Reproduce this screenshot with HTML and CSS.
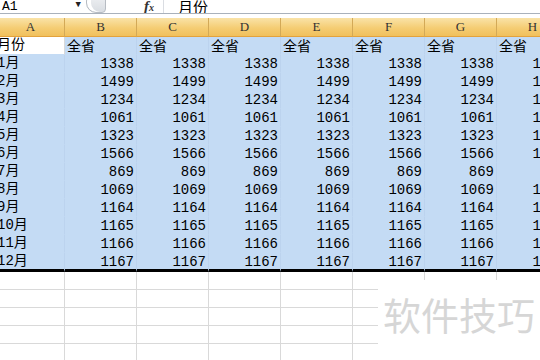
FILE: index.html
```html
<!DOCTYPE html>
<html lang="zh-CN">
<head>
    <meta charset="UTF-8">
    <title>Excel</title>
    <link rel="stylesheet" href="styles.css">
</head>
<body>
    <div class="formula-bar">
        <div class="name-box">A1<span class="drop">&#9660;</span></div>
        <div class="grip"></div>
        <div class="fx">f<sub>x</sub></div>
        <div class="formula">月份</div>
    </div>
    <div class="sheet">
        <div class="row head">
            <div class="cell">A</div><div class="cell">B</div><div class="cell">C</div><div class="cell">D</div>
            <div class="cell">E</div><div class="cell">F</div><div class="cell">G</div><div class="cell">H</div>
        </div>
        <div class="row sel">
            <div class="cell txt active">月份</div><div class="cell txt">全省</div><div class="cell txt">全省</div><div class="cell txt">全省</div>
            <div class="cell txt">全省</div><div class="cell txt">全省</div><div class="cell txt">全省</div><div class="cell txt">全省</div>
        </div>
        <div class="row sel">
            <div class="cell txt">1月</div><div class="cell">1338</div><div class="cell">1338</div><div class="cell">1338</div>
            <div class="cell">1338</div><div class="cell">1338</div><div class="cell">1338</div><div class="cell">1338</div>
        </div>
        <div class="row sel">
            <div class="cell txt">2月</div><div class="cell">1499</div><div class="cell">1499</div><div class="cell">1499</div>
            <div class="cell">1499</div><div class="cell">1499</div><div class="cell">1499</div><div class="cell">1499</div>
        </div>
        <div class="row sel">
            <div class="cell txt">3月</div><div class="cell">1234</div><div class="cell">1234</div><div class="cell">1234</div>
            <div class="cell">1234</div><div class="cell">1234</div><div class="cell">1234</div><div class="cell">1234</div>
        </div>
        <div class="row sel">
            <div class="cell txt">4月</div><div class="cell">1061</div><div class="cell">1061</div><div class="cell">1061</div>
            <div class="cell">1061</div><div class="cell">1061</div><div class="cell">1061</div><div class="cell">1061</div>
        </div>
        <div class="row sel">
            <div class="cell txt">5月</div><div class="cell">1323</div><div class="cell">1323</div><div class="cell">1323</div>
            <div class="cell">1323</div><div class="cell">1323</div><div class="cell">1323</div><div class="cell">1323</div>
        </div>
        <div class="row sel">
            <div class="cell txt">6月</div><div class="cell">1566</div><div class="cell">1566</div><div class="cell">1566</div>
            <div class="cell">1566</div><div class="cell">1566</div><div class="cell">1566</div><div class="cell">1566</div>
        </div>
        <div class="row sel">
            <div class="cell txt">7月</div><div class="cell">869</div><div class="cell">869</div><div class="cell">869</div>
            <div class="cell">869</div><div class="cell">869</div><div class="cell">869</div><div class="cell">869</div>
        </div>
        <div class="row sel">
            <div class="cell txt">8月</div><div class="cell">1069</div><div class="cell">1069</div><div class="cell">1069</div>
            <div class="cell">1069</div><div class="cell">1069</div><div class="cell">1069</div><div class="cell">1069</div>
        </div>
        <div class="row sel">
            <div class="cell txt">9月</div><div class="cell">1164</div><div class="cell">1164</div><div class="cell">1164</div>
            <div class="cell">1164</div><div class="cell">1164</div><div class="cell">1164</div><div class="cell">1164</div>
        </div>
        <div class="row sel">
            <div class="cell txt">10月</div><div class="cell">1165</div><div class="cell">1165</div><div class="cell">1165</div>
            <div class="cell">1165</div><div class="cell">1165</div><div class="cell">1165</div><div class="cell">1165</div>
        </div>
        <div class="row sel">
            <div class="cell txt">11月</div><div class="cell">1166</div><div class="cell">1166</div><div class="cell">1166</div>
            <div class="cell">1166</div><div class="cell">1166</div><div class="cell">1166</div><div class="cell">1166</div>
        </div>
        <div class="row sel last">
            <div class="cell txt">12月</div><div class="cell">1167</div><div class="cell">1167</div><div class="cell">1167</div>
            <div class="cell">1167</div><div class="cell">1167</div><div class="cell">1167</div><div class="cell">1167</div>
        </div>
        <div class="row"><div class="cell"></div><div class="cell"></div><div class="cell"></div><div class="cell"></div><div class="cell"></div><div class="cell"></div><div class="cell"></div><div class="cell"></div></div>
        <div class="row"><div class="cell"></div><div class="cell"></div><div class="cell"></div><div class="cell"></div><div class="cell"></div><div class="cell"></div><div class="cell"></div><div class="cell"></div></div>
        <div class="row"><div class="cell"></div><div class="cell"></div><div class="cell"></div><div class="cell"></div><div class="cell"></div><div class="cell"></div><div class="cell"></div><div class="cell"></div></div>
        <div class="row"><div class="cell"></div><div class="cell"></div><div class="cell"></div><div class="cell"></div><div class="cell"></div><div class="cell"></div><div class="cell"></div><div class="cell"></div></div>
        <div class="row"><div class="cell"></div><div class="cell"></div><div class="cell"></div><div class="cell"></div><div class="cell"></div><div class="cell"></div><div class="cell"></div><div class="cell"></div></div>
    </div>
    <div class="watermark">软件技巧</div>
</body>
</html>
```

FILE: styles.css
```css
* { margin: 0; padding: 0; box-sizing: border-box; }
html, body { width: 540px; height: 360px; overflow: hidden; background: #fff; }
body { position: relative; font-family: "Liberation Mono", "Noto Sans CJK SC", monospace; color: #000; }

.formula-bar {
    height: 14px;
    display: flex;
    align-items: flex-start;
    border-bottom: 1px solid #a9b1bb;
    margin-bottom: 4px;
    overflow: hidden;
}
.name-box {
    width: 86px;
    display: flex;
    justify-content: space-between;
    font-size: 13px;
    line-height: 13px;
    padding-left: 2px;
    padding-right: 5px;
}
.drop { font-size: 9px; line-height: 10px; color: #222; }
.grip {
    width: 20px;
    height: 22px;
    margin-top: -9px;
    border: 1px solid #b7bcc3;
    border-radius: 10px 4px 4px 10px;
    background: linear-gradient(#f4f5f7, #d9dde2);
    box-shadow: inset 4px 0 0 #fff;
}
.fx {
    width: 58px;
    padding-left: 38px;
    font-family: "Liberation Serif", serif;
    font-style: italic;
    font-weight: bold;
    font-size: 15px;
    line-height: 12px;
    color: #333;
    border-right: 1px solid #dadde2;
    height: 13px;
}
.fx sub { font-size: 10px; vertical-align: 0; }
.formula {
    padding-left: 14px;
    font-family: "Noto Sans CJK SC", sans-serif;
    font-size: 15px;
    line-height: 13px;
}

.sheet { margin-left: -3px; }
.row { display: flex; height: 18px; }
.cell {
    flex: 0 0 72px;
    height: 18px;
    border-right: 1px solid #d9d9d9;
    border-bottom: 1px solid #d9d9d9;
    text-align: right;
    padding-right: 2px;
    font-size: 14px;
    line-height: 18px;
    white-space: nowrap;
    overflow: hidden;
}
.cell:first-child { flex-basis: 68px; }
.cell.txt { text-align: left; padding-left: 2px; font-family: "Noto Sans CJK SC", sans-serif; line-height: 17px; }
.cell.txt:first-child { padding-left: 0; font-family: "Liberation Mono", "Noto Sans CJK SC", monospace; }

.head { height: 19px; }
.head .cell {
    height: 19px;
    text-align: center;
    padding: 0;
    font-family: "Liberation Serif", serif;
    font-size: 13px;
    line-height: 18px;
    color: #333;
    background: linear-gradient(#fae3a8, #f5cd74 55%, #f1c05c);
    border-right: 1px solid #d3a957;
    border-bottom: 1px solid #e3a23c;
}

.sel .cell { background: #c4dbf4; border-right-color: #bcd3ee; border-bottom-color: #c4dbf4; }
.sel .cell.active { background: #fff; border-right-color: #d9d9d9; border-bottom-color: #c4dbf4; }
.last .cell { height: 19px; border-bottom: 3px solid #000; }
.last { height: 19px; }

.watermark {
    position: absolute;
    left: 378px;
    top: 280px;
    width: 162px;
    height: 80px;
    background: #fff;
    padding-top: 12px;
    padding-left: 5px;
    font-family: "Noto Sans CJK SC", sans-serif;
    font-size: 38px;
    line-height: 44px;
    color: #d6d6d6;
}
```
